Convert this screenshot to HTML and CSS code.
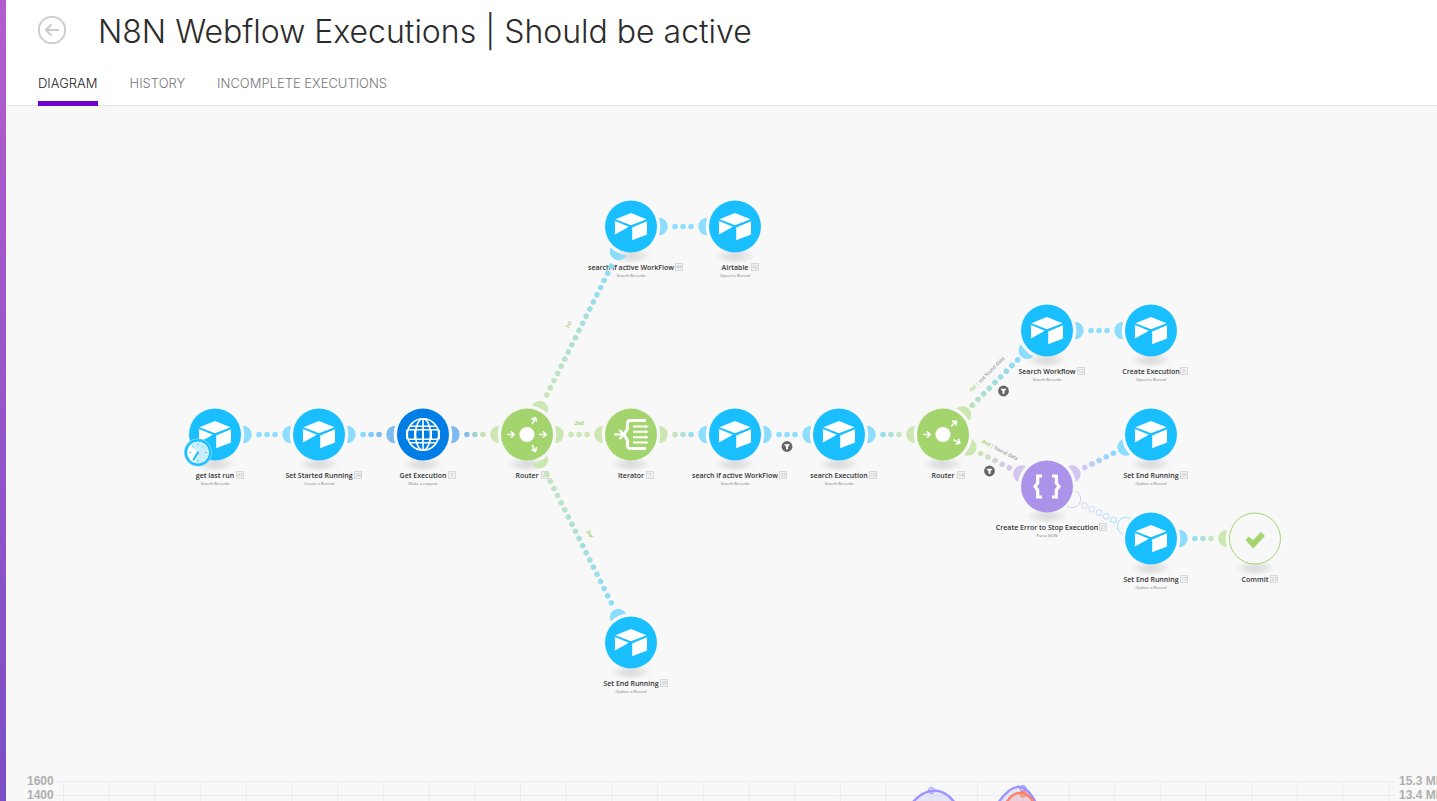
FILE: index.html
```html
<!DOCTYPE html>
<html lang="en">
<head>
<meta charset="utf-8">
<title>N8N Webflow Executions | Should be active</title>
<link rel="stylesheet" href="styles.css">
</head>
<body>
<div class="rail"></div>
<main class="page">
  <header class="header">
    <div class="title-row">
      <button class="back" type="button" aria-label="Back">
        <svg viewBox="0 0 28 28" width="28" height="28"><circle cx="14" cy="14" r="13.2"/><path d="M21 14H8M13.500 8.500L7.800 14l5.700 5.500"/></svg>
      </button>
      <h1 class="title">N8N Webflow Executions | Should be active</h1>
    </div>
    <nav class="tabs">
      <a class="tab tab-active" href="#diagram">DIAGRAM</a>
      <a class="tab" href="#history">HISTORY</a>
      <a class="tab" href="#incomplete">INCOMPLETE EXECUTIONS</a>
    </nav>
  </header>

  <section class="diagram" id="diagram">
    <svg class="canvas" viewBox="6 106 1431 669">
      <defs>
        <radialGradient id="shade"><stop offset="0" stop-color="#000" stop-opacity=".12"/><stop offset=".5" stop-color="#000" stop-opacity=".07"/><stop offset="1" stop-color="#000" stop-opacity="0"/></radialGradient>
        <linearGradient id="sky-ocean" gradientUnits="userSpaceOnUse" x1="42" y1="0" x2="62" y2="0"><stop stop-color="#8cdcfe"/><stop offset="1" stop-color="#7cbaf0"/></linearGradient>
        <linearGradient id="ocean-leaf" gradientUnits="userSpaceOnUse" x1="42" y1="0" x2="62" y2="0"><stop stop-color="#7cbaf0"/><stop offset="1" stop-color="#cde7b3"/></linearGradient>
        <linearGradient id="leaf-sky" gradientUnits="userSpaceOnUse" x1="40" y1="0" x2="64" y2="0"><stop stop-color="#cde7b3"/><stop offset="1" stop-color="#8cdcfe"/></linearGradient>
        <linearGradient id="sky-leaf" gradientUnits="userSpaceOnUse" x1="40" y1="0" x2="64" y2="0"><stop stop-color="#8cdcfe"/><stop offset="1" stop-color="#cde7b3"/></linearGradient>
        <linearGradient id="leaf-sky-long" gradientUnits="userSpaceOnUse" x1="28" y1="0" x2="204" y2="0"><stop stop-color="#cde7b3"/><stop offset="1" stop-color="#86daff"/></linearGradient>
        <linearGradient id="leaf-sky-mid" gradientUnits="userSpaceOnUse" x1="34" y1="0" x2="110" y2="0"><stop stop-color="#bfe3bb"/><stop offset="1" stop-color="#86daff"/></linearGradient>
        <linearGradient id="leaf-plum" gradientUnits="userSpaceOnUse" x1="38" y1="0" x2="78" y2="0"><stop stop-color="#cde7b3"/><stop offset="1" stop-color="#d4c6f4"/></linearGradient>
        <linearGradient id="plum-sky" gradientUnits="userSpaceOnUse" x1="38" y1="0" x2="78" y2="0"><stop stop-color="#d4c6f4"/><stop offset="1" stop-color="#86daff"/></linearGradient>

        <path id="dots" d="M44 0h16.100"/>
        <path id="cap" d="M28-8.700A8.700 8.700 0 0 1 28 8.700A29.300 29.300 0 0 0 28-8.700z"/>
        <path id="cap-line" d="M27-8.700H28A8.700 8.700 0 0 1 28 8.700H27"/>
        <ellipse id="base" cy="29.500" rx="21" ry="8" fill="url(#shade)"/>
        <g id="airtable"><circle r="26" fill="#19bfff"/><path fill="#fff" d="M-15.500-7.200L0-13.500 15.500-7.200 0-1.200zM-16-5.500L-2.200.200-16 8zM1.200.900L16-5.300V8L1.200 13.700z"/></g>
        <g id="arrow" fill="none" stroke="#fff" stroke-width="1.600"><path d="M-4 0H3M0-3L3.200 0 0 3"/></g>
        <g id="filter"><circle r="5.400" fill="#666"/><path fill="#fff" d="M-3-2.300h6L1 .3V2.800h-2V.3z"/></g>
        <rect id="badge" x="-3.500" y="37" width="7" height="7" fill="#f3f3f3" stroke="#d8d8d8"/>
      </defs>

      <g transform="translate(0 .5)">
      <g class="bases">
        <use href="#base" x="215" y="434"/><use href="#base" x="319" y="434"/><use href="#base" x="423" y="434"/><use href="#base" x="527" y="434"/>
        <use href="#base" x="631" y="434"/><use href="#base" x="735" y="434"/><use href="#base" x="839" y="434"/><use href="#base" x="943" y="434"/>
        <use href="#base" x="631" y="226"/><use href="#base" x="735" y="226"/><use href="#base" x="1047" y="330"/><use href="#base" x="1151" y="330"/>
        <use href="#base" x="1151" y="434"/><use href="#base" x="1047" y="486"/><use href="#base" x="1151" y="538"/><use href="#base" x="1255" y="538"/><use href="#base" x="631" y="642"/>
      </g>

      <g class="links">
        <!-- Connector caps, each rotated toward the linked module -->
        <g fill="#8cdcfe">
          <use href="#cap" transform="translate(215 434)"/>
          <use href="#cap" transform="translate(319 434) rotate(180)"/>
          <use href="#cap" transform="translate(319 434)"/>
          <use href="#cap" transform="translate(735 434) rotate(180)"/>
          <use href="#cap" transform="translate(735 434)"/>
          <use href="#cap" transform="translate(839 434) rotate(180)"/>
          <use href="#cap" transform="translate(839 434)"/>
          <use href="#cap" transform="translate(631 226)"/>
          <use href="#cap" transform="translate(631 226) rotate(116.600)"/>
          <use href="#cap" transform="translate(735 226) rotate(180)"/>
          <use href="#cap" transform="translate(1047 330)"/>
          <use href="#cap" transform="translate(1047 330) rotate(135)"/>
          <use href="#cap" transform="translate(1151 330) rotate(180)"/>
          <use href="#cap" transform="translate(1151 434) rotate(153.400)"/>
          <use href="#cap" transform="translate(1151 538)"/>
          <use href="#cap" transform="translate(631 642) rotate(243.400)"/>
        </g>
        <g fill="#7cbaf0">
          <use href="#cap" transform="translate(423 434) rotate(180)"/>
          <use href="#cap" transform="translate(423 434)"/>
        </g>
        <g fill="#cde7b3">
          <use href="#cap" transform="translate(527 434) rotate(180)"/>
          <use href="#cap" transform="translate(527 434)"/>
          <use href="#cap" transform="translate(527 434) rotate(-63.400)"/>
          <use href="#cap" transform="translate(527 434) rotate(63.400)"/>
          <use href="#cap" transform="translate(631 434) rotate(180)"/>
          <use href="#cap" transform="translate(631 434)"/>
          <use href="#cap" transform="translate(943 434) rotate(180)"/>
          <use href="#cap" transform="translate(943 434) rotate(-45)"/>
          <use href="#cap" transform="translate(943 434) rotate(26.600)"/>
          <use href="#cap" transform="translate(1255 538) rotate(180)"/>
        </g>
        <g fill="#d4c6f1">
          <use href="#cap" transform="translate(1047 486) rotate(206.600)"/>
          <use href="#cap" transform="translate(1047 486) rotate(-26.600)"/>
        </g>
        <use href="#cap-line" transform="translate(1047 486) rotate(26.600)" fill="none" stroke="#d4c6f4" stroke-width=".8"/>
        <use href="#cap-line" transform="translate(1151 538) rotate(206.600)" fill="none" stroke="#8cdcfe" stroke-width=".8"/>
      </g>

      <g class="modules">
        <g transform="translate(215 434)">
          <use href="#airtable"/>
          <circle cx="-17" cy="18" r="14" fill="#7fd9ff"/><circle cx="-17" cy="18" r="13.200" fill="#19bfff"/><circle cx="-17" cy="18" r="10.800" fill="#fff"/>
          <path fill="#c9efff" d="M-17 18L-25 10.600A10.800 10.800 0 1 1-19.500 28.400z"/>
          <path d="M-17 18l-4.300 7" stroke="#19bfff" stroke-width="2.200" stroke-linecap="round"/><path d="M-17 9.200v1.500M-25.500 18h1.500M-10 18h1.500M-17 25.300v1.500M-22.500 12l1 1M-11.500 12l-1 1" stroke="#19bfff"/>
          <text class="name" y="43">get last run</text><text class="kind" y="50">Search Records</text>
          <g transform="translate(25 0)"><use href="#badge"/><text class="num" y="42.500">41</text></g>
        </g>
        <g transform="translate(319 434)">
          <use href="#airtable"/><text class="name" y="43">Set Started Running</text><text class="kind" y="50">Create a Record</text>
          <g transform="translate(39 0)"><use href="#badge"/><text class="num" y="42.500">34</text></g>
        </g>
        <g transform="translate(423 434)">
          <circle r="26" fill="#007ee5"/>
          <g fill="none" stroke="#fff" stroke-width="1.600"><circle r="15.700"/><ellipse rx="7.500" ry="15.700"/><path d="M0-15.700V15.700M-13.300-8.200h26.600M-13.300 8.200h26.600M-15 -4.700H15M-15 4.700H15"/></g>
          <path d="M-16-4.700v9.400M-8-4.700v9.400M0-4.700v9.400M8-4.700v9.400M16-4.700v9.400" stroke="#fff" stroke-width="2"/>
          <text class="name" y="43">Get Execution</text><text class="kind" y="50">Make a request</text>
          <g transform="translate(29 0)"><use href="#badge"/><text class="num" y="42.500">5</text></g>
        </g>
        <g transform="translate(527 434)">
          <circle r="26" fill="#a3d46e"/><circle r="7.600" fill="#fff"/>
          <use href="#arrow" transform="translate(-16 0)"/><use href="#arrow" transform="translate(16 0)"/>
          <use href="#arrow" transform="translate(7 -14) rotate(-63)"/><use href="#arrow" transform="translate(7 14) rotate(63)"/>
          <text class="name" y="43">Router</text>
          <g transform="translate(18 0)"><use href="#badge"/><text class="num" y="42.500">26</text></g>
        </g>
        <g transform="translate(631 434)">
          <circle r="26" fill="#a3d46e"/>
          <g fill="none" stroke="#fff"><path stroke-width="2.800" d="M15-14H-1Q-3.500-14-3.500-11V-6L-7 0-3.500 6V11Q-3.500 14-1 14H15"/><path stroke-width="2.200" d="M-17 0H-7M-11.500-4.500L-7 0-11.500 4.500"/><path stroke-width="2" d="M2-8H15.500M2-2.700H15.500M2 2.700H15.500M2 8H15.500"/></g>
          <path fill="#fff" d="M14.500-10l3 2-3 2zM14.500-4.700l3 2-3 2zM14.500.700l3 2-3 2zM14.500 6l3 2-3 2z"/>
          <text class="name" y="43">Iterator</text>
          <g transform="translate(19 0)"><use href="#badge"/><text class="num" y="42.500">7</text></g>
        </g>
        <g transform="translate(735 434)">
          <use href="#airtable"/><text class="name" y="43">search if active WorkFlow</text><text class="kind" y="50">Search Records</text>
          <g transform="translate(48 0)"><use href="#badge"/><text class="num" y="42.500">33</text></g>
        </g>
        <g transform="translate(839 434)">
          <use href="#airtable"/><text class="name" y="43">search Execution</text><text class="kind" y="50">Search Records</text>
          <g transform="translate(34 0)"><use href="#badge"/><text class="num" y="42.500">10</text></g>
        </g>
        <g transform="translate(943 434)">
          <circle r="26" fill="#a3d46e"/><circle r="7.600" fill="#fff"/>
          <use href="#arrow" transform="translate(-16 0)"/><use href="#arrow" transform="translate(11 -11) rotate(-45)"/><use href="#arrow" transform="translate(14 7) rotate(27)"/>
          <text class="name" y="43">Router</text>
          <g transform="translate(18 0)"><use href="#badge"/><text class="num" y="42.500">14</text></g>
        </g>
        <g transform="translate(631 226)">
          <use href="#airtable"/><text class="name" y="43">search if active WorkFlow</text><text class="kind" y="50">Search Records</text>
          <g transform="translate(48 0)"><use href="#badge"/><text class="num" y="42.500">44</text></g>
        </g>
        <g transform="translate(735 226)">
          <use href="#airtable"/><text class="name" y="43">Airtable</text><text class="kind" y="50">Upsert a Record</text>
          <g transform="translate(20 0)"><use href="#badge"/><text class="num" y="42.500">42</text></g>
        </g>
        <g transform="translate(1047 330)">
          <use href="#airtable"/><text class="name" y="43">Search Workflow</text><text class="kind" y="50">Search Records</text>
          <g transform="translate(34 0)"><use href="#badge"/><text class="num" y="42.500">12</text></g>
        </g>
        <g transform="translate(1151 330)">
          <use href="#airtable"/><text class="name" y="43">Create Execution</text><text class="kind" y="50">Upsert a Record</text>
          <g transform="translate(33 0)"><use href="#badge"/><text class="num" y="42.500">8</text></g>
        </g>
        <g transform="translate(1151 434)">
          <use href="#airtable"/><text class="name" y="43">Set End Running</text><text class="kind" y="50">Update a Record</text>
          <g transform="translate(33 0)"><use href="#badge"/><text class="num" y="42.500">36</text></g>
        </g>
        <g transform="translate(1047 486)">
          <circle r="26" fill="#ab93e9"/>
          <path fill="none" stroke="#fff" stroke-width="3.200" d="M-5-10.500H-9.300V-3.500L-12 0-9.300 3.500V10.500H-5M5-10.500H9.300V-3.500L12 0 9.300 3.500V10.500H5"/>
          <text class="name" y="43">Create Error to Stop Execution</text><text class="kind" y="50">Parse JSON</text>
          <g transform="translate(56 0)"><use href="#badge"/><text class="num" y="42.500">21</text></g>
        </g>
        <g transform="translate(1151 538)">
          <use href="#airtable"/><text class="name" y="43">Set End Running</text><text class="kind" y="50">Update a Record</text>
          <g transform="translate(33 0)"><use href="#badge"/><text class="num" y="42.500">17</text></g>
        </g>
        <g transform="translate(1255 538)">
          <circle r="25.500" fill="#f8f8f8" stroke="#a3d46e"/><path fill="#a3d46e" d="M-9.500 1.500L-6-2-2.300 1.700 6-6.500 10-2.500-2 10z"/>
          <text class="name" y="43">Commit</text>
          <g transform="translate(19 0)"><use href="#badge"/><text class="num" y="42.500">23</text></g>
        </g>
        <g transform="translate(631 642)">
          <use href="#airtable"/><text class="name" y="43">Set End Running</text><text class="kind" y="50">Update a Record</text>
          <g transform="translate(33 0)"><use href="#badge"/><text class="num" y="42.500">39</text></g>
        </g>
      </g>

      <g class="dotted">
        <use href="#dots" transform="translate(215 434)" stroke="#8cdcfe"/>
        <use href="#dots" transform="translate(319 434)" stroke="url(#sky-ocean)"/>
        <use href="#dots" transform="translate(423 434)" stroke="url(#ocean-leaf)"/>
        <use href="#dots" transform="translate(527 434)" stroke="#cde7b3"/>
        <use href="#dots" transform="translate(631 434)" stroke="url(#leaf-sky)"/>
        <use href="#dots" transform="translate(735 434)" stroke="#8cdcfe"/>
        <use href="#dots" transform="translate(839 434)" stroke="url(#sky-leaf)"/>
        <use href="#dots" transform="translate(631 226)" stroke="#8cdcfe"/>
        <use href="#dots" transform="translate(1047 330)" stroke="#8cdcfe"/>
        <use href="#dots" transform="translate(1151 538)" stroke="url(#sky-leaf)"/>
        <path d="M44.300 0h144.100" transform="translate(527 434) rotate(-63.400)" stroke="url(#leaf-sky-long)"/>
        <path d="M44.300 0h144.100" transform="translate(527 434) rotate(63.400)" stroke="url(#leaf-sky-long)"/>
        <path d="M41.500 0h64.100" transform="translate(943 434) rotate(-45)" stroke="url(#leaf-sky-mid)"/>
        <path d="M42.200 0h32.100" transform="translate(943 434) rotate(26.600)" stroke="url(#leaf-plum)"/>
        <path d="M42.200 0h32.100" transform="translate(1047 486) rotate(-26.600)" stroke="url(#plum-sky)"/>
      </g>
      <g fill="none" stroke-width=".8">
        <circle cx="1084.500" cy="505" r="2.900" stroke="#d4c6f4"/><circle cx="1091.700" cy="508.600" r="2.900" stroke="#c9cbf6"/><circle cx="1099" cy="512.200" r="2.900" stroke="#b4d0fa"/><circle cx="1106.200" cy="515.800" r="2.900" stroke="#a0d6fc"/><circle cx="1113.400" cy="519.400" r="2.900" stroke="#8cdcfe"/>
      </g>

      <use href="#filter" x="787" y="446"/><use href="#filter" x="1003.500" y="390.500"/><use href="#filter" x="989.500" y="470.500"/>
      <text class="route" x="579" y="424">2nd</text>
      <text class="route" transform="translate(570 325) rotate(-63.400)">1st</text>
      <text class="route" transform="translate(588 534) rotate(63.400)">3rd</text>
      <text class="route" transform="translate(988 375) rotate(-45)">1st | <tspan class="cond">not found data</tspan></text>
      <text class="route" transform="translate(999 451) rotate(26.600)">2nd | <tspan class="cond">found data</tspan></text>
      </g>
    </svg>
  </section>

  <section class="chart" id="history">
    <svg class="plot" viewBox="6 775 1431 26">
      <defs><pattern id="columns" x="63" y="781" width="45.700" height="40" patternUnits="userSpaceOnUse"><path d="M.5 0V40" stroke="#ececec"/></pattern></defs>
      <rect x="63" y="781" width="1327" height="20" fill="url(#columns)"/>
      <path d="M55 781.500H1396M55 795.500H1396" stroke="#ececec"/>
      <g stroke-width="2.500">
        <path d="M912 803C926 787 942 786 955 803M998 803C1012 783 1024 780 1036 803" fill="#9b95ff" fill-opacity=".2" stroke="#9b95ff"/>
        <path d="M1006 803C1014 790 1026 789 1034 803" fill="#ff8066" fill-opacity=".2" stroke="#ff8066"/>
      </g>
      <g fill="#9b95ff" fill-opacity=".3" stroke="#9b95ff"><circle cx="931.500" cy="790.500" r="3"/><circle cx="1023" cy="788.500" r="3"/><circle cx="1023" cy="794" r="3" fill="#ff8066" stroke="#ff8066"/></g>
      <text class="tick" x="27" y="785">1600</text><text class="tick" x="27" y="799">1400</text>
      <text class="tick" x="1399" y="785">15.3 MB</text><text class="tick" x="1399" y="799">13.4 MB</text>
    </svg>
  </section>
</main>
</body>
</html>
```
FILE: styles.css
```css
* { box-sizing: border-box; }
body {
  margin: 0;
  height: 100vh;
  display: flex;
  overflow: hidden;
  background: #f8f8f8;
  font-family: Inter, "Open Sans", sans-serif;
}
.rail { flex: 0 0 6px; background: linear-gradient(#b45ccf, #7a4fc3); }
.page { flex: 1; min-width: 0; display: flex; flex-direction: column; }
.header {
  background: #fff;
  border-bottom: 1px solid #e2e2e2;
  padding: 10px 32px 0;
}
.title-row { display: flex; align-items: flex-start; gap: 32px; height: 42px; }
.back { width: 28px; height: 28px; margin-top: 6px; padding: 0; border: 0; background: none; cursor: pointer; }
.back svg { display: block; fill: none; stroke: #ccc; stroke-width: 2; }
.title { margin: 0; font-size: 32px; line-height: 44px; font-weight: 300; color: #2b2b2b; white-space: nowrap; }
.tabs { display: flex; gap: 32px; height: 54px; margin-bottom: -1px; align-items: flex-end; }
.tab {
  padding-bottom: 9px;
  border-bottom: 5px solid transparent;
  font-size: 13px;
  line-height: 18px;
  font-weight: 300;
  color: #777;
  text-decoration: none;
  white-space: nowrap;
}
.tab-active { color: #222; border-bottom-color: #6d00cc; }
.diagram { flex: 1; min-height: 0; }
.canvas { display: block; width: 100%; height: 100%; }
.canvas text { font-family: "Open Sans", sans-serif; text-anchor: middle; }
.canvas .name { font-size: 7px; font-weight: 600; fill: #333; }
.canvas .kind { font-size: 4px; fill: #777; }
.canvas .num { font-size: 5px; fill: #bbb; }
.canvas .route { font-size: 5px; font-weight: 700; font-style: italic; fill: #a3d46e; }
.canvas .cond { font-weight: 400; font-style: normal; fill: #777; }
.dotted { fill: none; stroke-width: 5.6; stroke-linecap: round; stroke-dasharray: 0 8; }
.chart { flex: none; }
.plot { display: block; width: 100%; }
.tick { font: bold 12px "Liberation Sans", Arial, sans-serif; fill: #afafaf; }
```
